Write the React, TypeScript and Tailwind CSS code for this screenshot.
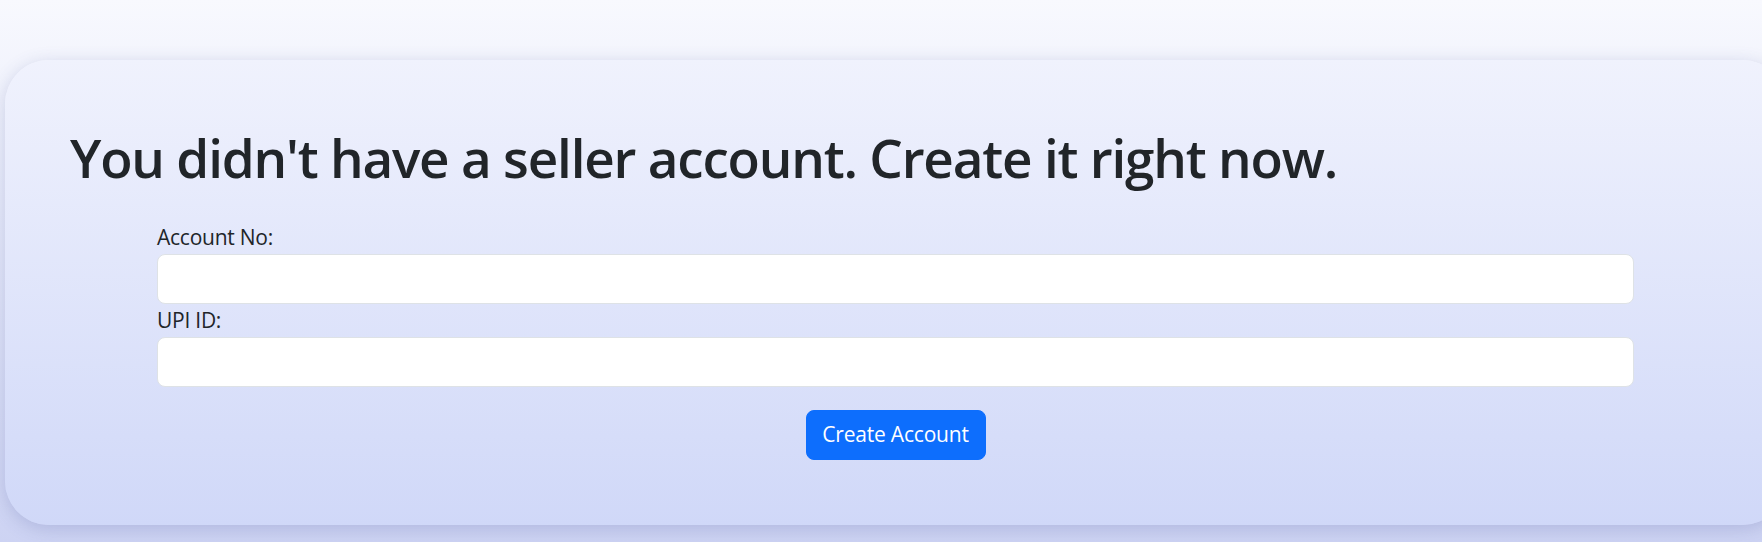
import React from "react";

export default function App() {
  return (
    <div className="w-full h-[542px] overflow-hidden bg-gradient-to-b from-[#f8f9fe] to-[#cdd3f3] font-['Open_Sans',sans-serif] text-[#212529]">
      <div className="pt-[60px] pl-[5px]">
        <div className="w-[1781px] h-[465px] rounded-[44px] bg-gradient-to-b from-[#f0f2fd] to-[#d0d8f8] shadow-[0_4px_18px_rgba(70,80,150,0.22)] pt-[64px] px-[64px]">
          <h1 className="text-[53px] leading-[67px] font-semibold tracking-[-1.2px] pl-[1px]">
            You didn't have a seller account. Create it right now.
          </h1>
          <form className="w-[1477px] mx-auto mt-[30px] flex flex-col" onSubmit={(e) => e.preventDefault()}>
            <label className="text-[21px] leading-[33px] tracking-[-0.25px]">Account No:</label>
            <input className="h-[50px] rounded-[8px] bg-white border border-[#dee2e6] outline-none px-3" />
            <label className="text-[21px] leading-[33px] tracking-[-0.25px]">UPI ID:</label>
            <input className="h-[50px] rounded-[8px] bg-white border border-[#dee2e6] outline-none px-3" />
            <div className="flex justify-center mt-[23px]">
              <button className="h-[50px] w-[180px] rounded-[8px] bg-[#0d6efd] border border-[#0d6efd] text-white text-[21px] tracking-[-0.2px]">
                Create Account
              </button>
            </div>
          </form>
        </div>
      </div>
    </div>
  );
}
